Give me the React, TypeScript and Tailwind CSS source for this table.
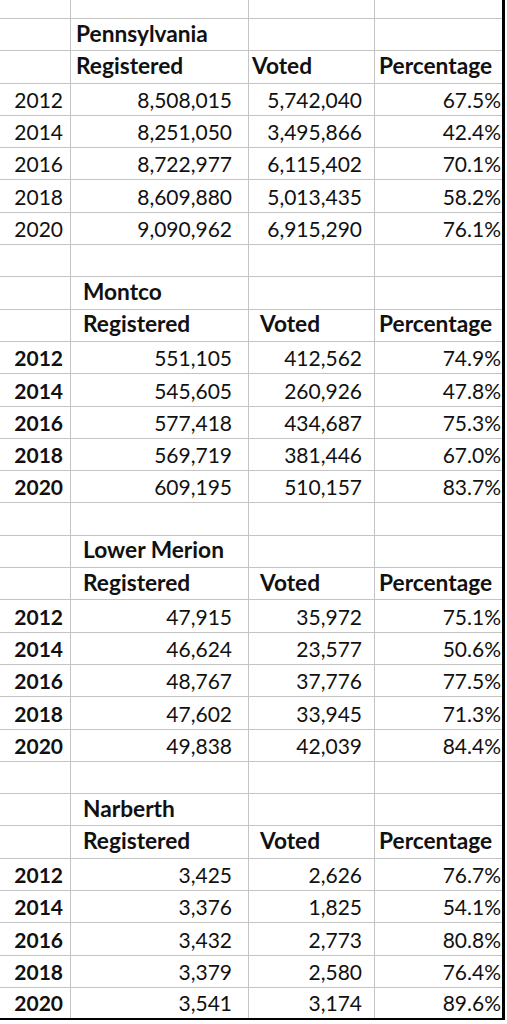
type Section = {
  name: string;
  boldYears: boolean;
  wide: boolean;
  rows: [string, string, string, string][];
};

const sections: Section[] = [
  {
    name: "Pennsylvania",
    boldYears: false,
    wide: false,
    rows: [
      ["2012", "8,508,015", "5,742,040", "67.5%"],
      ["2014", "8,251,050", "3,495,866", "42.4%"],
      ["2016", "8,722,977", "6,115,402", "70.1%"],
      ["2018", "8,609,880", "5,013,435", "58.2%"],
      ["2020", "9,090,962", "6,915,290", "76.1%"],
    ],
  },
  {
    name: "Montco",
    boldYears: true,
    wide: true,
    rows: [
      ["2012", "551,105", "412,562", "74.9%"],
      ["2014", "545,605", "260,926", "47.8%"],
      ["2016", "577,418", "434,687", "75.3%"],
      ["2018", "569,719", "381,446", "67.0%"],
      ["2020", "609,195", "510,157", "83.7%"],
    ],
  },
  {
    name: "Lower Merion",
    boldYears: true,
    wide: true,
    rows: [
      ["2012", "47,915", "35,972", "75.1%"],
      ["2014", "46,624", "23,577", "50.6%"],
      ["2016", "48,767", "37,776", "77.5%"],
      ["2018", "47,602", "33,945", "71.3%"],
      ["2020", "49,838", "42,039", "84.4%"],
    ],
  },
  {
    name: "Narberth",
    boldYears: true,
    wide: true,
    rows: [
      ["2012", "3,425", "2,626", "76.7%"],
      ["2014", "3,376", "1,825", "54.1%"],
      ["2016", "3,432", "2,773", "80.8%"],
      ["2018", "3,379", "2,580", "76.4%"],
      ["2020", "3,541", "3,174", "89.6%"],
    ],
  },
];

function Row({
  a,
  b,
  c,
  d,
  height = "h-[32.3px]",
  last = false,
  boldA = false,
  head = false,
  wide = false,
}: {
  a?: string;
  b?: string;
  c?: string;
  d?: string;
  height?: string;
  last?: boolean;
  boldA?: boolean;
  head?: boolean;
  wide?: boolean;
}) {
  const border = last ? "border-b-2 border-b-black" : "border-b border-b-[#c4c4c4]";
  const headText = "font-bold text-[22.7px]";
  return (
    <div className={`flex ${height} ${border}`}>
      <div
        className={`flex w-[71px] shrink-0 items-end justify-end border-r border-[#c4c4c4] pr-[7px] pb-[5px] leading-none ${
          boldA ? "font-bold" : ""
        }`}
      >
        {a}
      </div>
      <div
        className={`flex w-[178px] shrink-0 items-end border-r border-[#c4c4c4] pb-[5px] leading-none ${
          head ? `${headText} ${wide ? "pl-[12px]" : "pl-[5px]"}` : "justify-end pr-[16px]"
        }`}
      >
        {b}
      </div>
      <div
        className={`flex w-[126px] shrink-0 items-end border-r border-[#c4c4c4] pb-[5px] leading-none ${
          head ? `${headText} ${wide ? "pl-[11px]" : "pl-[3px]"}` : "justify-end pr-[12px]"
        }`}
      >
        {c}
      </div>
      <div
        className={`flex w-[127px] shrink-0 items-end pb-[5px] leading-none ${
          head ? `${headText} pl-[4px]` : "justify-end pr-[1px]"
        }`}
      >
        {d}
      </div>
    </div>
  );
}

export default function App() {
  return (
    <div className="h-[1024px] w-[507px] overflow-hidden bg-white">
      <div className="w-[505px] border-r-[3px] border-black font-['Lato',sans-serif] text-[21px] text-[#111]">
        <Row height="h-[19px]" />
        {sections.map((s, si) => {
          const lastSection = si === sections.length - 1;
          return (
            <div key={s.name}>
              <Row b={s.name} head wide={s.wide} />
              <Row b="Registered" c="Voted" d="Percentage" head wide={s.wide} />
              {s.rows.map((r, ri) => (
                <Row
                  key={r[0]}
                  a={r[0]}
                  b={r[1]}
                  c={r[2]}
                  d={r[3]}
                  boldA={s.boldYears}
                  last={lastSection && ri === s.rows.length - 1}
                />
              ))}
              {!lastSection && <Row />}
            </div>
          );
        })}
      </div>
    </div>
  );
}
